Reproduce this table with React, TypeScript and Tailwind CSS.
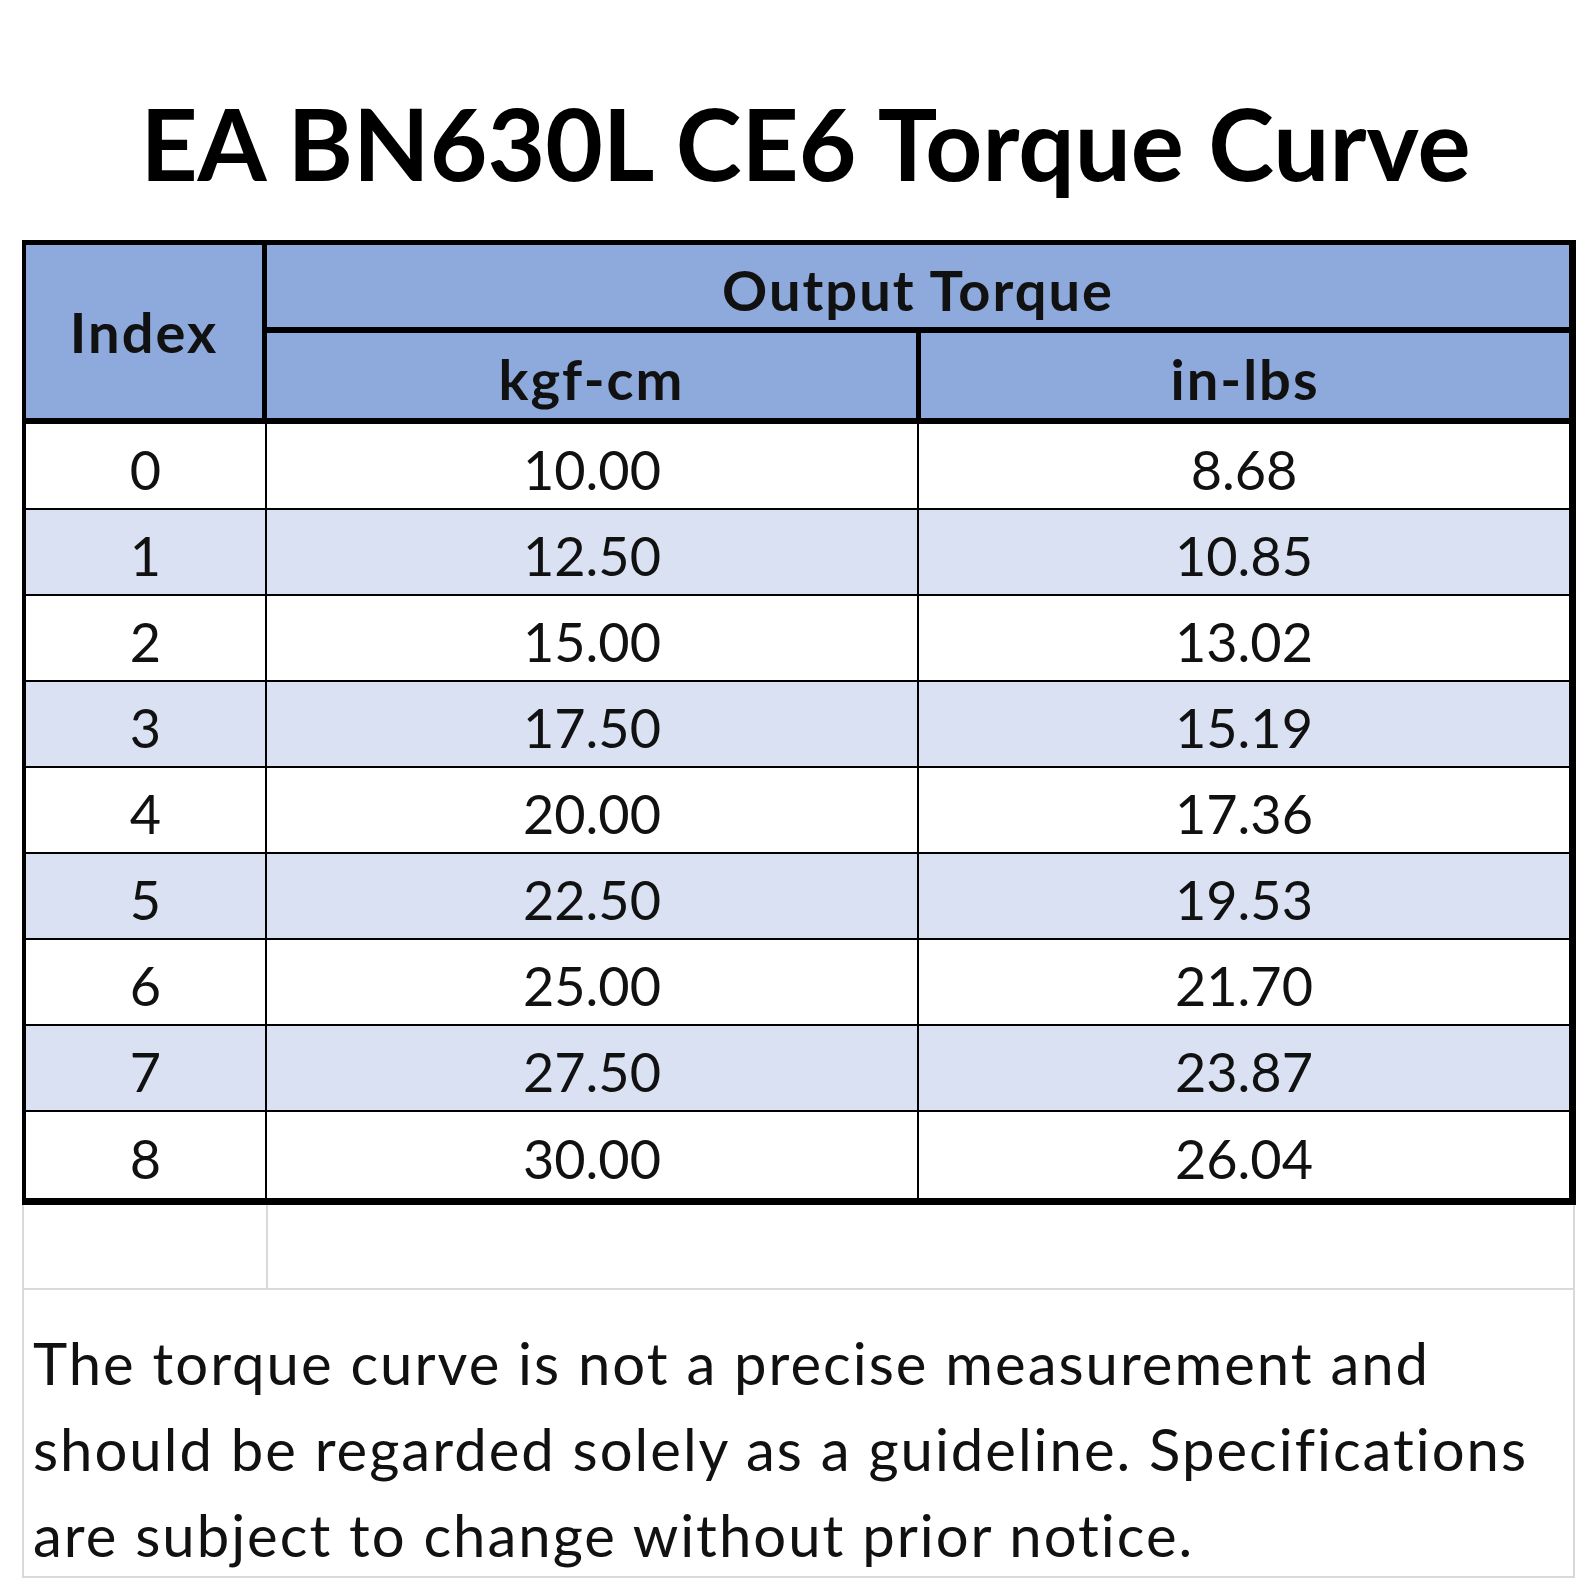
import React from 'react';

const rows = [
  ['0', '10.00', '8.68'],
  ['1', '12.50', '10.85'],
  ['2', '15.00', '13.02'],
  ['3', '17.50', '15.19'],
  ['4', '20.00', '17.36'],
  ['5', '22.50', '19.53'],
  ['6', '25.00', '21.70'],
  ['7', '27.50', '23.87'],
  ['8', '30.00', '26.04'],
];

export default function App() {
  return (
    <div className="w-[1590px] h-[1590px] bg-white text-[#111] font-['Lato',sans-serif] overflow-hidden">
      {/* Title */}
      <h1 className="mt-[93px] pl-[34px] w-[1577px] text-center text-[99.5px] leading-[100px] font-bold text-black whitespace-nowrap">
        EA BN630L CE6 Torque Curve
      </h1>

      {/* Torque table */}
      <div className="mt-[47px] ml-[22px] w-[1554px] border-t-[5px] border-l-[4px] border-r-[7px] border-b-[7px] border-black">
        {/* Header */}
        <div className="flex bg-[#8ea9db] text-[56px] font-bold tracking-[2px]">
          <div className="w-[241px] border-r-[5px] border-black flex items-center justify-center pt-[1px]">
            Index
          </div>
          <div className="flex-1 flex flex-col">
            <div className="h-[88px] border-b-[6px] border-black flex items-center justify-center pt-[7px]">
              Output Torque
            </div>
            <div className="h-[85px] flex">
              <div className="w-[654px] border-r-[5px] border-black flex items-center justify-center pt-[7px]">
                kgf-cm
              </div>
              <div className="flex-1 flex items-center justify-center pt-[7px]">in-lbs</div>
            </div>
          </div>
        </div>
        <div className="h-[6px] bg-black" />

        {/* Body */}
        {rows.map(([idx, kgf, inlbs], i) => (
          <div
            key={idx}
            className={`flex h-[86px] text-[54px] ${i % 2 === 1 ? 'bg-[#d9e1f2]' : 'bg-white'} ${
              i < rows.length - 1 ? 'border-b-2 border-black' : ''
            }`}
          >
            <div className="w-[241px] border-r-2 border-black flex items-center justify-center pt-[6px]">{idx}</div>
            <div className="w-[652px] border-r-2 border-black flex items-center justify-center pt-[6px]">{kgf}</div>
            <div className="flex-1 flex items-center justify-center pt-[6px]">{inlbs}</div>
          </div>
        ))}
      </div>

      {/* Sheet area below the table */}
      <div className="ml-[22px] w-[1553px] border-l-2 border-r-2 border-b-2 border-[#d9d9d9]">
        <div className="h-[85px] border-b-2 border-[#d9d9d9] flex">
          <div className="w-[244px] border-r-2 border-[#d9d9d9]" />
        </div>
        <div className="h-[286px] pt-[30px] pl-[9px] text-[58px] leading-[86px] tracking-[2px] whitespace-nowrap">
          <span className="block">The torque curve is not a precise measurement and</span>
          <span className="block">should be regarded solely as a guideline. Specifications</span>
          <span className="block">are subject to change without prior notice.</span>
        </div>
      </div>
    </div>
  );
}
